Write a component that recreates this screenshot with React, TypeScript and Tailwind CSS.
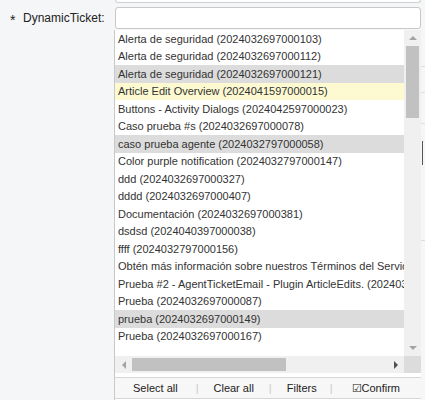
const items = [
  { label: "Alerta de seguridad (2024032697000103)" },
  { label: "Alerta de seguridad (2024032697000112)" },
  { label: "Alerta de seguridad (2024032697000121)", tone: "gray" },
  { label: "Article Edit Overview (2024041597000015)", tone: "yellow" },
  { label: "Buttons - Activity Dialogs (2024042597000023)" },
  { label: "Caso prueba #s (2024032697000078)" },
  { label: "caso prueba agente (2024032797000058)", tone: "gray" },
  { label: "Color purple notification (2024032797000147)" },
  { label: "ddd (2024032697000327)" },
  { label: "dddd (2024032697000407)" },
  { label: "Documentación (2024032697000381)" },
  { label: "dsdsd (2024040397000038)" },
  { label: "ffff (2024032797000156)" },
  { label: "Obtén más información sobre nuestros Términos del Servicio (2024032697000211)" },
  { label: "Prueba #2 - AgentTicketEmail - Plugin ArticleEdits. (2024032697000190)" },
  { label: "Prueba (2024032697000087)" },
  { label: "prueba (2024032697000149)", tone: "gray" },
  { label: "Prueba (2024032697000167)" },
];

function rowTone(tone?: string) {
  if (tone === "gray") return "bg-[#dcdcdc]";
  if (tone === "yellow") return "bg-[#fdfad2]";
  return "";
}

export default function App() {
  return (
    <div className="w-[425px] h-[400px] overflow-hidden bg-[#f5f6f8] text-[#333] font-['Liberation_Sans',Arial,sans-serif] flex">
      <div className="w-[421px] shrink-0 flex flex-col">
        {/* previous field edge */}
        <div className="ml-[115px] h-[3px] border-x border-b border-[#cfcfcf] rounded-b-[3px] bg-white" />

        {/* label + input */}
        <div className="flex items-center mt-[4px]">
          <div className="w-[114px] shrink-0 flex items-center text-[12px] text-[#222]">
            <span className="ml-[10px] w-[13px] text-[14px] leading-none pt-[3px]">*</span>
            <span>DynamicTicket:</span>
          </div>
          <div className="flex-1 ml-px h-[22px] bg-white border border-[#c8c8c8] rounded-[3px]" />
        </div>

        {/* dropdown */}
        <div className="ml-[114px] mt-px flex-1 bg-white border-l border-[#c8c8c8] flex flex-col">
          <div className="flex h-[326px]">
            <div className="flex-1 overflow-hidden">
              {items.map((it) => (
                <div
                  key={it.label}
                  className={`h-[17.5px] flex items-center pl-[3px] text-[11px] whitespace-nowrap ${rowTone(it.tone)}`}
                >
                  {it.label}
                </div>
              ))}
            </div>
            {/* vertical scrollbar */}
            <div className="w-[17px] shrink-0 bg-[#f0f0f0] flex flex-col items-center">
              <div className="h-[16px] flex items-center justify-center">
                <div className="w-0 h-0 border-x-[4px] border-x-transparent border-b-[4px] border-b-[#a3a3a3]" />
              </div>
              <div className="w-[13px] h-[72px] bg-[#c1c1c1]" />
              <div className="flex-1" />
              <div className="h-[16px] flex items-center justify-center">
                <div className="w-0 h-0 border-x-[4px] border-x-transparent border-t-[4px] border-t-[#a3a3a3]" />
              </div>
            </div>
          </div>

          {/* horizontal scrollbar */}
          <div className="flex h-[17px]">
            <div className="flex-1 bg-[#f0f0f0] flex items-center">
              <div className="w-[17px] flex justify-center">
                <div className="w-0 h-0 border-y-[4px] border-y-transparent border-r-[4px] border-r-[#a3a3a3]" />
              </div>
              <div className="w-[154px] h-[13px] bg-[#c1c1c1]" />
              <div className="flex-1" />
              <div className="w-[17px] flex justify-center">
                <div className="w-0 h-0 border-y-[4px] border-y-transparent border-l-[4px] border-l-[#505050]" />
              </div>
            </div>
            <div className="w-[17px] bg-[#dcdcdc]" />
          </div>

          {/* footer */}
          <div className="mt-[4px] h-[22px] border-y border-[#d6d6d6] bg-[#f7f7f7] flex items-center text-[11px] text-[#222]">
            <span className="ml-[18px]">Select all</span>
            <span className="ml-[18px] text-[#c8c8c8]">|</span>
            <span className="ml-[15px]">Clear all</span>
            <span className="ml-[15px] text-[#c8c8c8]">|</span>
            <span className="ml-[15px]">Filters</span>
            <span className="ml-[13px] text-[#c8c8c8]">|</span>
            <span className="ml-[19px]">☑Confirm</span>
          </div>
        </div>
      </div>

      {/* content peeking behind the dropdown */}
      <div className="flex-1 flex flex-col">
        <div className="h-[66px]" />
        <div className="h-[26px] border-t border-[#dedede]" />
        <div className="h-[31px] border-t border-[#dedede]" />
        <div className="h-[117px] border-t border-[#dedede] pt-[17px]">
          <div className="ml-px w-[2px] h-[24px] border-l border-[#555]" />
        </div>
        <div className="flex-1 border-t border-[#dedede]" />
      </div>
    </div>
  );
}
